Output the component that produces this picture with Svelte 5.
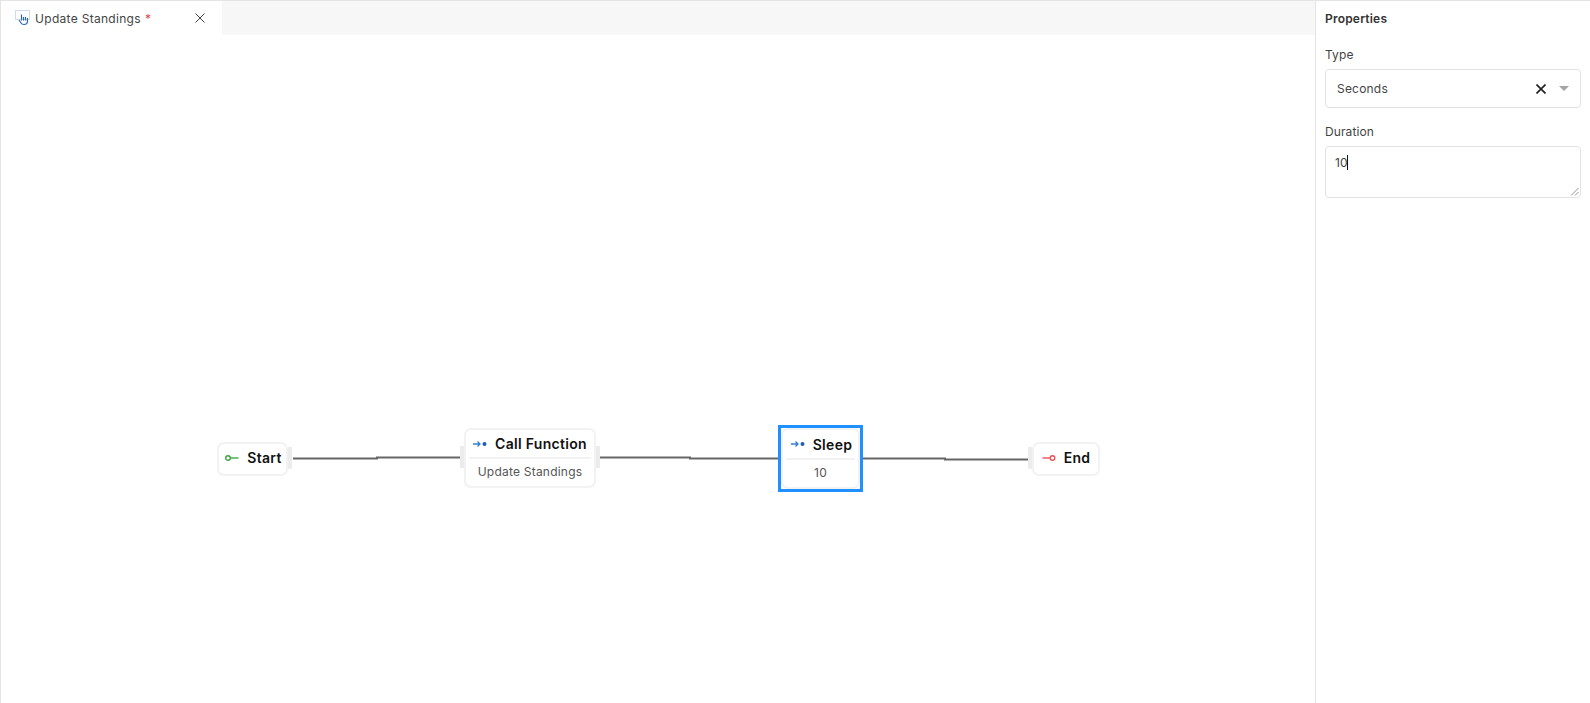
<script lang="ts">
  const nodes = [
    { id: 'start', title: 'Start', icon: 'start', x: 217, y: 442, w: 71, h: 34, out: true, nudge: true },
    { id: 'call', title: 'Call Function', sub: 'Update Standings', icon: 'step', x: 464, y: 428, w: 132, h: 60, in: true, out: true },
    { id: 'sleep', title: 'Sleep', sub: '10', icon: 'step', x: 781, y: 428, w: 79, h: 61, selected: true, nudge: true },
    { id: 'end', title: 'End', icon: 'end', x: 1032, y: 442, w: 68, h: 34, in: true }
  ];

  const edges = [
    'M293 458.5H377V457.5H460',
    'M600 457.5H690V458.5H778',
    'M863 458.5H945V459.5H1028'
  ];
</script>

<div class="app">
  <main class="editor">
    <div class="tabs">
      <div class="tab">
        <svg class="tab-icon" width="16" height="16" viewBox="0 0 16 16" fill="none">
          <rect x="0.5" y="0.5" width="14" height="9" stroke="#9db9dc" stroke-dasharray="1 1" />
          <path d="M6.500 4.500v6M8.500 7v3.500M10.500 7v3.500M12.500 8v3c0 2-1.500 3.500-3.500 3.500-1.500 0-2.500-.6-3-1.500l-2-3" stroke="#2a68ad" stroke-width="1.200" />
        </svg>
        <span class="tab-name">Update Standings</span>
        <span class="dirty">*</span>
        <svg class="tab-close" width="10" height="10" viewBox="0 0 10 10">
          <path d="M.5.500l9 9M9.500.500l-9 9" stroke="#444" stroke-width="1" />
        </svg>
      </div>
    </div>

    <div class="canvas">
      <svg class="edges" width="1316" height="703">
        {#each edges as d}
          <path {d} fill="none" stroke="#666" stroke-width="2" />
        {/each}
      </svg>

      {#each nodes as node (node.id)}
        <div class="node" class:selected={node.selected} style={`left:${node.x}px;top:${node.y}px;width:${node.w}px;height:${node.h}px`}>
          {#if node.in}<span class="port port-in"></span>{/if}
          {#if node.out}<span class="port port-out"></span>{/if}
          <div class="node-head" class:solo={!node.sub} class:nudge={node.nudge}>
            {#if node.icon === 'start'}
              <svg width="14" height="8" viewBox="0 0 14 8" fill="none">
                <circle cx="3" cy="4" r="2.300" stroke="#3fa63f" stroke-width="1.400" />
                <path d="M5.500 4H13.500" stroke="#3fa63f" stroke-width="1.400" />
              </svg>
            {:else if node.icon === 'end'}
              <svg width="14" height="8" viewBox="0 0 14 8" fill="none">
                <path d="M0.500 4H8" stroke="#f0505a" stroke-width="1.400" />
                <circle cx="10.500" cy="4" r="2.300" stroke="#f0505a" stroke-width="1.400" />
              </svg>
            {:else}
              <svg width="14" height="8" viewBox="0 0 14 8" fill="none">
                <path d="M0 4H7M4.500 1.500L7 4L4.500 6.500" stroke="#2f7fd6" stroke-width="1.300" />
                <circle cx="11.500" cy="4" r="2" fill="#1f5fb0" />
              </svg>
            {/if}
            <span class="node-title">{node.title}</span>
          </div>
          {#if node.sub}
            <div class="node-sub">{node.sub}</div>
          {/if}
        </div>
      {/each}
    </div>
  </main>

  <aside class="props">
    <h2>Properties</h2>
    <div class="field">
      <span class="label">Type</span>
      <div class="select">
        <span class="select-value">Seconds</span>
        <svg width="10" height="10" viewBox="0 0 10 10">
          <path d="M.5.500l9 9M9.500.500l-9 9" stroke="#222" stroke-width="1.700" />
        </svg>
        <span class="caret"></span>
      </div>
    </div>
    <div class="field">
      <span class="label">Duration</span>
      <div class="textarea">
        <span class="text">10</span><span class="cursor"></span>
        <svg class="grip" width="9" height="9" viewBox="0 0 9 9">
          <path d="M1 8.500L8.500 1M5 8.500L8.500 5" stroke="#777" stroke-width="0.800" />
        </svg>
      </div>
    </div>
  </aside>
</div>

<style>
  :global(body) {
    margin: 0;
    background: #fff;
    font-family: Inter, 'Liberation Sans', sans-serif;
  }

  .app {
    display: flex;
    width: 1590px;
    height: 703px;
    box-sizing: border-box;
    border-top: 1px solid #e4e4e4;
    border-left: 1px solid #e4e4e4;
    overflow: hidden;
  }

  .editor {
    position: relative;
    flex: 1;
    min-width: 0;
    display: flex;
    flex-direction: column;
  }

  .tabs {
    height: 34px;
    background: #f7f7f7;
    display: flex;
    flex-shrink: 0;
  }

  .tab {
    width: 221px;
    box-sizing: border-box;
    background: #fff;
    display: flex;
    align-items: center;
    padding-left: 14px;
    font-size: 12px;
    color: #444;
  }

  .tab-icon {
    margin-right: 4px;
  }

  .tab-name {
    letter-spacing: 0.3px;
  }

  .dirty {
    color: #e5484d;
    margin-left: 4px;
  }

  .tab-close {
    margin-left: auto;
    margin-right: 17px;
    margin-top: -1px;
  }

  .canvas {
    flex: 1;
  }

  .edges {
    position: absolute;
    left: -1px;
    top: -1px;
    pointer-events: none;
  }

  .node {
    position: absolute;
    box-sizing: border-box;
    margin: -1px 0 0 -1px;
    background: #fff;
    border: 2px solid #f2f2f2;
    border-radius: 7px;
    display: flex;
    flex-direction: column;
    align-items: stretch;
  }

  .node.selected::after {
    content: '';
    position: absolute;
    inset: -5px;
    border: 3px solid #1e90ff;
    pointer-events: none;
  }

  .node-head {
    flex: 1;
    display: flex;
    align-items: center;
    justify-content: center;
    gap: 8px;
    font-size: 14px;
    font-weight: 600;
    letter-spacing: 0.3px;
    color: #111;
  }

  .node-head.solo {
    padding-bottom: 3px;
  }

  .node-head.nudge {
    padding-left: 2px;
  }

  .node-sub {
    height: 29px;
    margin: 0 3px;
    padding-bottom: 3px;
    border-top: 2px solid #f2f2f2;
    box-sizing: border-box;
    display: flex;
    align-items: center;
    justify-content: center;
    font-size: 12px;
    color: #555;
    letter-spacing: 0.22px;
  }

  .port {
    position: absolute;
    top: 50%;
    width: 4px;
    height: 22px;
    margin-top: -12px;
    background: #ececec;
  }

  .port-in {
    left: -6px;
  }

  .port-out {
    right: -6px;
  }

  .props {
    width: 275px;
    flex-shrink: 0;
    box-sizing: border-box;
    border-left: 1px solid #e4e4e4;
    padding: 11px 9px 0 9px;
    color: #333;
  }

  h2 {
    margin: 0 0 21px;
    font-size: 12px;
    line-height: 14px;
    font-weight: 600;
    letter-spacing: 0.2px;
    color: #333;
  }

  .field {
    margin-bottom: 16px;
  }

  .label {
    display: block;
    font-size: 12px;
    line-height: 15px;
    margin-bottom: 7px;
    color: #444;
    letter-spacing: 0.1px;
  }

  .select {
    height: 39px;
    box-sizing: border-box;
    border: 1px solid #e3e3e3;
    border-radius: 4px;
    display: flex;
    align-items: center;
    padding: 0 11px;
    font-size: 12px;
    color: #444;
  }

  .select-value {
    flex: 1;
    letter-spacing: 0.2px;
  }

  .caret {
    width: 0;
    height: 0;
    margin-left: 13px;
    border-left: 5px solid transparent;
    border-right: 5px solid transparent;
    border-top: 5px solid #a5a5a5;
  }

  .textarea {
    position: relative;
    height: 52px;
    box-sizing: border-box;
    border: 1px solid #e3e3e3;
    border-radius: 4px;
    padding: 8px 9px;
    font-size: 12px;
    line-height: 15px;
    color: #444;
  }

  .cursor {
    display: inline-block;
    width: 1px;
    height: 15px;
    background: #111;
    vertical-align: top;
  }

  .grip {
    position: absolute;
    right: 1px;
    bottom: 1px;
  }
</style>
